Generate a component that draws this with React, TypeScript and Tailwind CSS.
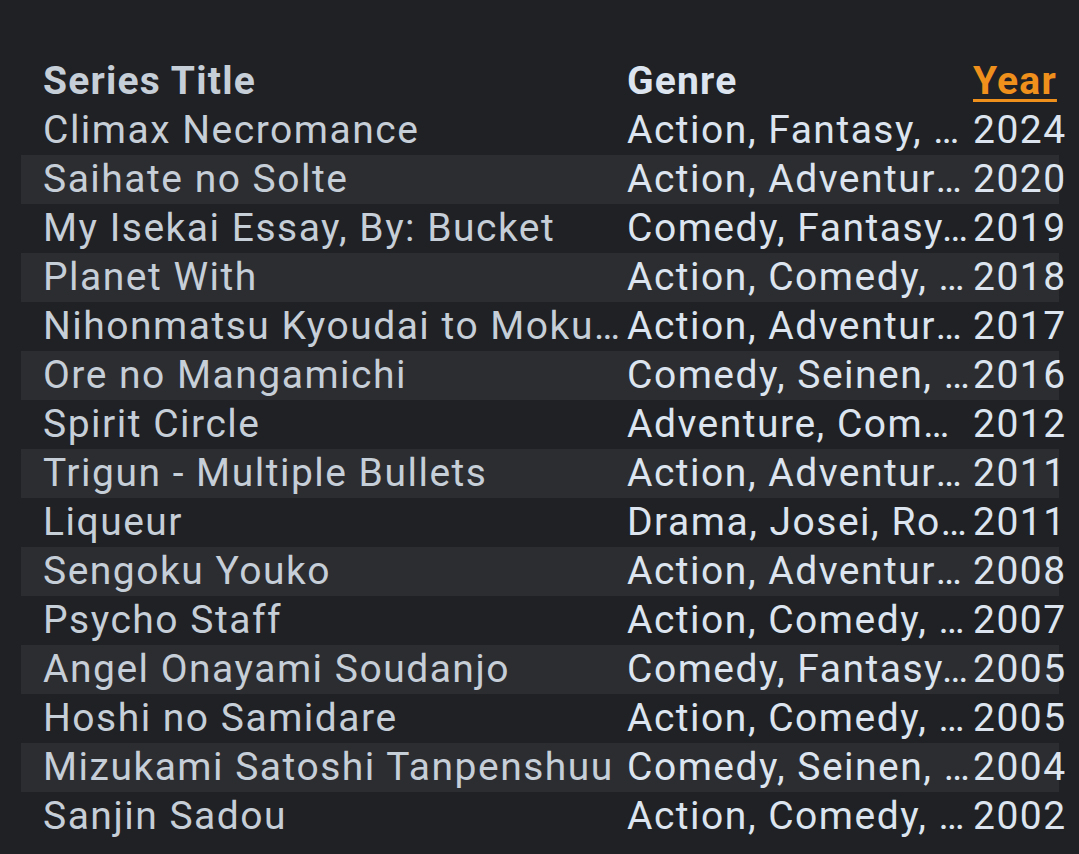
import React from 'react';

const rows: [string, string, string][] = [
  ['Climax Necromance', 'Action, Fantasy, Horror', '2024'],
  ['Saihate no Solte', 'Action, Adventure, Fantasy', '2020'],
  ['My Isekai Essay, By: Bucket', 'Comedy, Fantasy, Isekai', '2019'],
  ['Planet With', 'Action, Comedy, Drama', '2018'],
  ['Nihonmatsu Kyoudai to Mokuzou Apartment', 'Action, Adventure, Comedy', '2017'],
  ['Ore no Mangamichi', 'Comedy, Seinen, Slice of Life', '2016'],
  ['Spirit Circle', 'Adventure, Comedy, Drama', '2012'],
  ['Trigun - Multiple Bullets', 'Action, Adventure, Comedy', '2011'],
  ['Liqueur', 'Drama, Josei, Romance', '2011'],
  ['Sengoku Youko', 'Action, Adventure, Comedy', '2008'],
  ['Psycho Staff', 'Action, Comedy, Horror', '2007'],
  ['Angel Onayami Soudanjo', 'Comedy, Fantasy, Romance', '2005'],
  ['Hoshi no Samidare', 'Action, Comedy, Drama', '2005'],
  ['Mizukami Satoshi Tanpenshuu', 'Comedy, Seinen, Sci-Fi', '2004'],
  ['Sanjin Sadou', 'Action, Comedy, Drama', '2002'],
];

export default function App() {
  return (
    <div className="min-h-[854px] w-[1079px] overflow-hidden bg-[#202124] pt-[57px] pl-[21px] font-['Roboto',sans-serif] text-[39px] leading-[49px] tracking-[1.5px]">
      <div className="w-[1038px]">
        {/* header */}
        <div className="flex h-[49px] pl-[22px] font-bold tracking-[1.2px]">
          <div className="w-[584px] shrink-0 text-[#c6ced8]">Series Title</div>
          <div className="w-[346px] shrink-0 text-[#dce5ef]">Genre</div>
          <div className="shrink-0 whitespace-nowrap text-[#ef8f1c] underline decoration-[3px] underline-offset-[5px]">Year</div>
        </div>

        {rows.map(([title, genre, year], i) => (
          <div
            key={title}
            className={`flex h-[49px] pl-[22px] ${i % 2 === 1 ? 'bg-[#2c2d31]' : ''}`}
          >
            <div className="w-[584px] shrink-0 truncate pr-[4px] text-[#c6ced8]">{title}</div>
            <div className="w-[346px] shrink-0 truncate pr-[3px] text-[#dce5ef]">{genre}</div>
            <div className="shrink-0 whitespace-nowrap text-[#dce5ef]">{year}</div>
          </div>
        ))}
      </div>
    </div>
  );
}
